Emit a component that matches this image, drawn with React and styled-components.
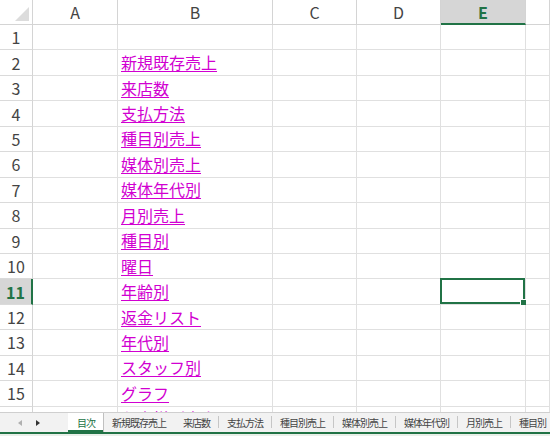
import React from 'react';
import styled, { createGlobalStyle } from 'styled-components';

const GlobalStyle = createGlobalStyle`
    html, body {
        margin: 0;
        padding: 0;
        background: #ffffff;
        overflow: hidden;
    }
    body {
        font-family: "Noto Sans CJK JP", "Noto Sans", sans-serif;
    }
`;

const GREEN = '#217346';
const COLS = ['A', 'B', 'C', 'D', 'E', ''];
const WIDTHS = '33px 85px 155px 84px 84px 85px 24px';

const links = [
    '',
    '新規既存売上',
    '来店数',
    '支払方法',
    '種目別売上',
    '媒体別売上',
    '媒体年代別',
    '月別売上',
    '種目別',
    '曜日',
    '年齢別',
    '返金リスト',
    '年代別',
    'スタッフ別',
    'グラフ',
    'お客様別売上',
];

const tabs = ['目次', '新規既存売上', '来店数', '支払方法', '種目別売上', '媒体別売上', '媒体年代別', '月別売上', '種目別'];

const Window = styled.div`
    width: 550px;
    height: 436px;
    display: flex;
    flex-direction: column;
    overflow: hidden;
`;

const Sheet = styled.div`
    height: 412px;
    flex-shrink: 0;
    overflow: hidden;
    display: grid;
    grid-template-columns: ${WIDTHS};
    grid-template-rows: 25px;
    grid-auto-rows: 25.45px;
`;

const Corner = styled.div`
    position: relative;
    border-right: 1px solid #d4d4d4;
    border-bottom: 1px solid #d4d4d4;
    box-sizing: border-box;

    &::after {
        content: '';
        position: absolute;
        right: 3px;
        bottom: 3px;
        border-style: solid;
        border-width: 0 0 14px 14px;
        border-color: transparent transparent #dcdcdc transparent;
    }
`;

const ColHead = styled.div`
    box-sizing: border-box;
    display: flex;
    align-items: center;
    justify-content: center;
    font-size: 16px;
    color: ${p => (p.$active ? GREEN : '#444')};
    font-weight: ${p => (p.$active ? 700 : 400)};
    background: ${p => (p.$active ? '#d6d6d6' : '#fff')};
    border-right: 1px solid #d4d4d4;
    border-bottom: ${p => (p.$active ? `2px solid ${GREEN}` : '1px solid #d4d4d4')};
    padding-top: ${p => (p.$active ? '1px' : '0')};
`;

const RowHead = styled.div`
    box-sizing: border-box;
    display: flex;
    align-items: center;
    justify-content: center;
    font-size: 16px;
    color: ${p => (p.$active ? GREEN : '#444')};
    font-weight: ${p => (p.$active ? 700 : 400)};
    background: ${p => (p.$active ? '#d6d6d6' : '#fff')};
    border-right: ${p => (p.$active ? `2px solid ${GREEN}` : '1px solid #d4d4d4')};
    border-bottom: 1px solid #dadada;
`;

const Cell = styled.div`
    position: relative;
    box-sizing: border-box;
    display: flex;
    align-items: center;
    padding-left: 3px;
    font-size: 16px;
    white-space: nowrap;
    overflow: visible;
    border-right: 1px solid #e0e0e0;
    border-bottom: 1px solid #e0e0e0;
`;

const Selection = styled.div`
    position: absolute;
    left: -1px;
    top: -1px;
    right: 0;
    bottom: 0;
    border: 2px solid ${GREEN};

    &::after {
        content: '';
        position: absolute;
        right: -4px;
        bottom: -4px;
        width: 5px;
        height: 5px;
        background: ${GREEN};
        border: 1px solid #fff;
    }
`;

const Link = styled.span`
    color: #d100d1;
    text-decoration: underline;
    text-underline-offset: 2px;
    line-height: 1;
    margin-top: -1px;
`;

const TabBar = styled.div`
    height: 22px;
    flex-shrink: 0;
    display: flex;
    align-items: stretch;
    overflow: hidden;
    background: #f2f2f2;
    border-top: 1px solid #cfcfcf;
    border-bottom: 2px solid ${GREEN};
    box-sizing: border-box;
`;

const StatusEdge = styled.div`
    height: 2px;
    flex-shrink: 0;
    background: #e9efe9;
`;

const Nav = styled.div`
    width: 68px;
    flex-shrink: 0;
    display: flex;
    align-items: center;
    padding-left: 18px;
    gap: 14px;
    box-sizing: border-box;
`;

const Arrow = styled.span`
    width: 0;
    height: 0;
    border-top: 3px solid transparent;
    border-bottom: 3px solid transparent;
    border-${p => (p.$left ? 'right' : 'left')}: 4px solid ${p => (p.$dim ? '#b0b0b0' : '#333')};
`;

const Tab = styled.div`
    flex-shrink: 0;
    display: flex;
    align-items: center;
    padding: 0 8px 0 9px;
    font-size: 10px;
    letter-spacing: -1px;
    white-space: nowrap;
    color: ${p => (p.$active ? GREEN : '#444')};
    background: ${p => (p.$active ? '#ffffff' : 'transparent')};
    box-shadow: ${p => (p.$active ? `inset 0 -2px 0 ${GREEN}, 1px 0 0 #c0c0c0` : 'none')};
    margin-top: -1px;
    position: relative;

    & + &::before {
        content: '';
        position: absolute;
        left: 0;
        top: 4px;
        bottom: 4px;
        width: 1px;
        background: ${p => (p.$prevActive ? 'transparent' : '#c6c6c6')};
    }
`;

const App = () => {
    return (
        <Window>
            <GlobalStyle />
            <Sheet>
                <Corner />
                {COLS.map((c, i) => (
                    <ColHead key={i} $active={c === 'E'}>{c}</ColHead>
                ))}
                {links.map((text, r) => {
                    const row = r + 1;
                    return (
                        <React.Fragment key={row}>
                            <RowHead $active={row === 11}>{row}</RowHead>
                            {COLS.map((c, i) => (
                                <Cell key={i}>
                                    {c === 'B' && text && <Link>{text}</Link>}
                                    {c === 'E' && row === 11 && <Selection />}
                                </Cell>
                            ))}
                        </React.Fragment>
                    );
                })}
            </Sheet>
            <TabBar>
                <Nav>
                    <Arrow $left $dim />
                    <Arrow />
                </Nav>
                {tabs.map((t, i) => (
                    <Tab key={t} $active={i === 0} $prevActive={i === 1}>{t}</Tab>
                ))}
            </TabBar>
            <StatusEdge />
        </Window>
    );
};

export default App;
